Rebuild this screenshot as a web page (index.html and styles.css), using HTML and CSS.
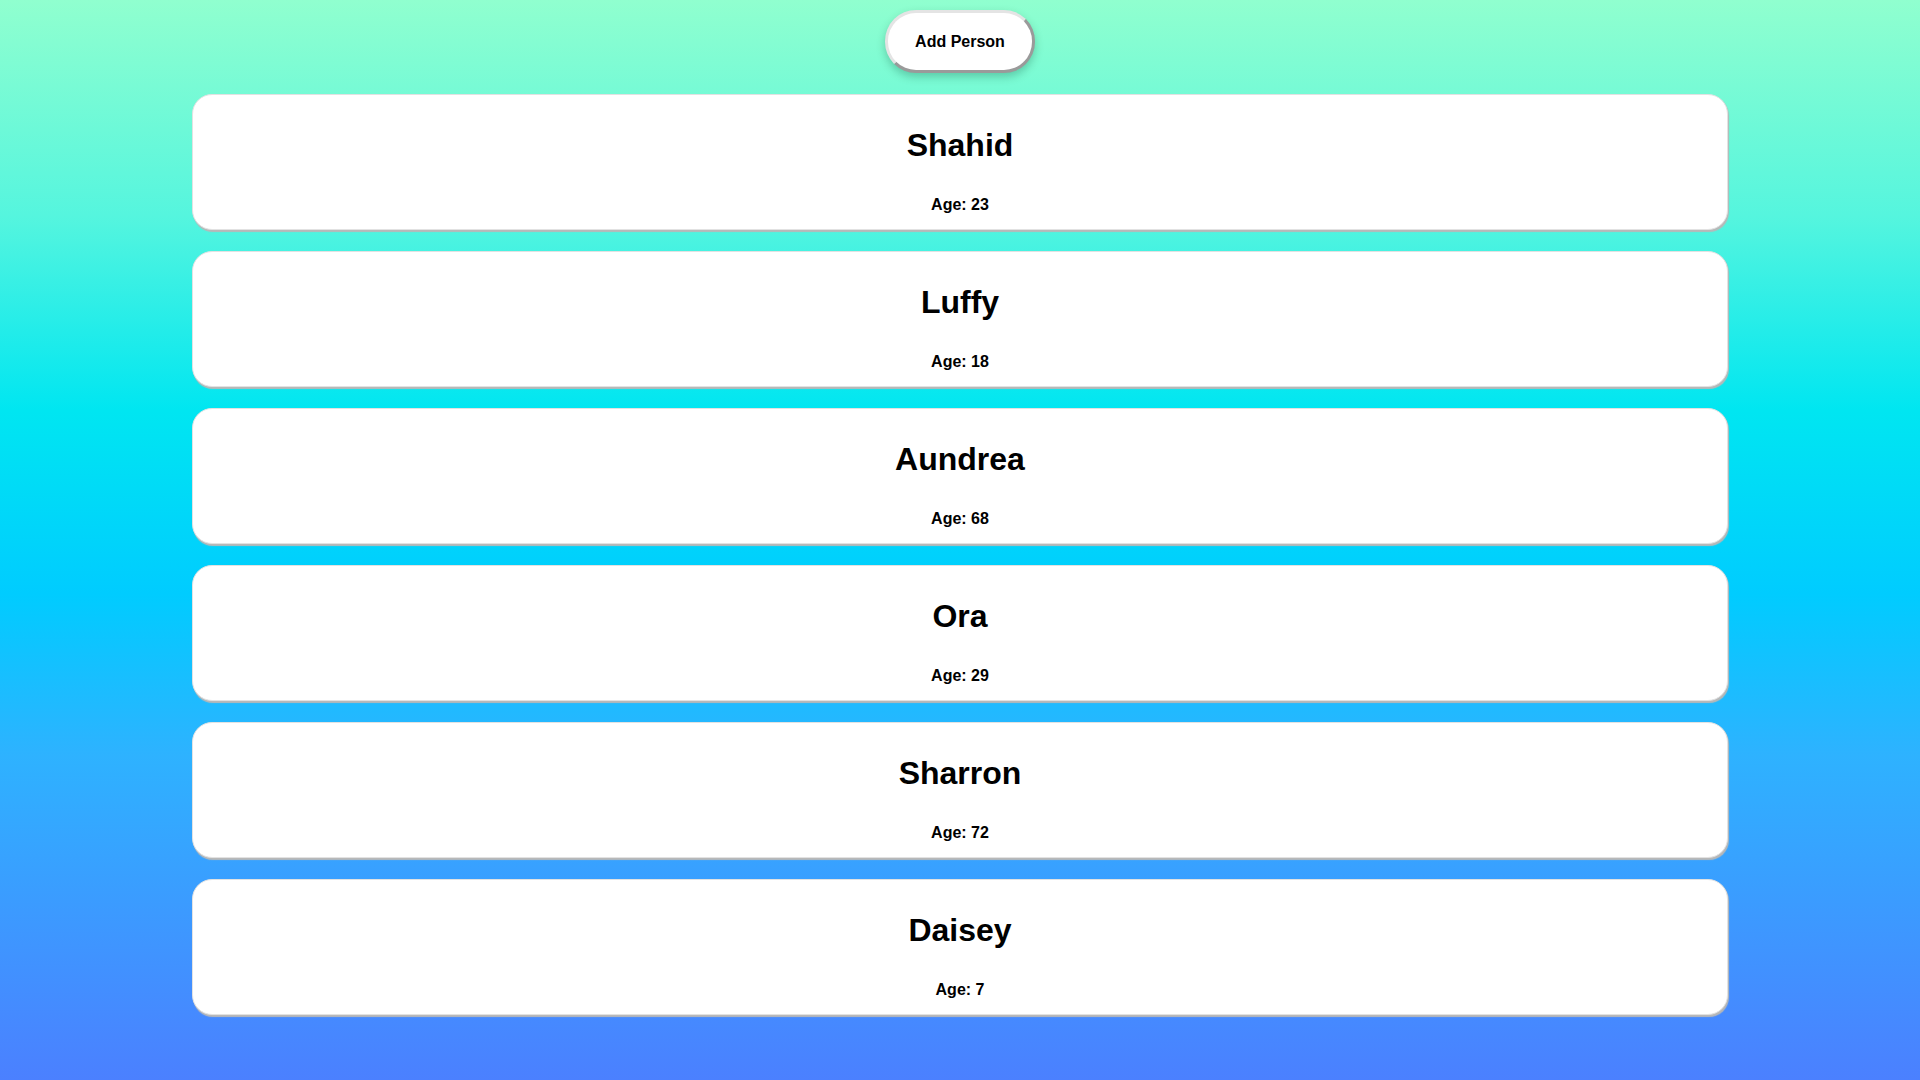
FILE: index.html
```html
<!DOCTYPE html>
<html lang="en">
<head>
<meta charset="utf-8">
<title>Persons</title>
<link rel="stylesheet" href="styles.css">
</head>
<body>
<div class="app">
  <button class="add-btn">Add Person</button>
  <div class="list">
    <div class="person"><h1 class="name">Shahid</h1><p class="age">Age: 23</p></div>
    <div class="person"><h1 class="name">Luffy</h1><p class="age">Age: 18</p></div>
    <div class="person"><h1 class="name">Aundrea</h1><p class="age">Age: 68</p></div>
    <div class="person"><h1 class="name">Ora</h1><p class="age">Age: 29</p></div>
    <div class="person"><h1 class="name">Sharron</h1><p class="age">Age: 72</p></div>
    <div class="person"><h1 class="name">Daisey</h1><p class="age">Age: 7</p></div>
  </div>
</div>
</body>
</html>
```
FILE: styles.css
```css
html, body {
  margin: 0;
  padding: 0;
  height: 100%;
}
body {
  font-family: "Liberation Sans", Arial, sans-serif;
  color: #000;
  background: linear-gradient(180deg, #90ffcf 0%, #55f5de 20%, #00e6f1 38%, #00ccff 55%, #2eb2ff 70%, #4b80ff 100%);
  min-height: 1080px;
}
.app {
  display: flex;
  flex-direction: column;
  align-items: center;
  padding-top: 10px;
}
.add-btn {
  font-family: "Liberation Sans", Arial, sans-serif;
  font-weight: bold;
  font-size: 16px;
  line-height: 18px;
  padding: 20px 27px 19px;
  background: #fff;
  color: #000;
  border-style: solid;
  border-width: 3px;
  border-color: #e4e4e4 #9a9a9a #9a9a9a #e4e4e4;
  border-radius: 31px;
  box-shadow: 0 4px 8px rgba(0, 60, 40, 0.25);
  cursor: pointer;
  margin-bottom: 21px;
}
.list {
  width: 80%;
  display: flex;
  flex-direction: column;
  gap: 21px;
}
.person {
  background: #fff;
  border: 1px solid #e2e2e2;
  border-radius: 20px;
  box-shadow: 1px 2px 1px #b8b8b8;
  padding: 32px 0 15px;
  display: flex;
  flex-direction: column;
  align-items: center;
  gap: 32px;
}
.name {
  margin: 0;
  font-size: 32px;
  line-height: 37px;
  font-weight: bold;
}
.age {
  margin: 0;
  font-size: 16px;
  line-height: 18px;
  font-weight: bold;
}
```
